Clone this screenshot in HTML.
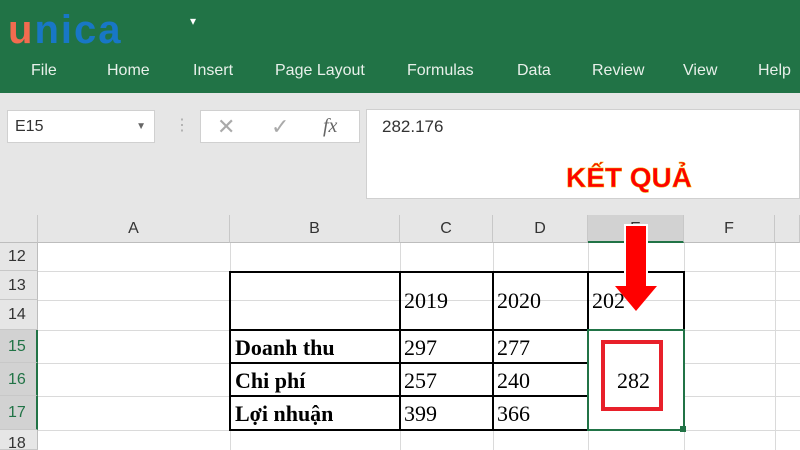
<!DOCTYPE html><html><head><style>
*{margin:0;padding:0;box-sizing:border-box}
html,body{width:800px;height:450px;overflow:hidden}
body{background:#e6e6e6;font-family:"Liberation Sans",sans-serif;position:relative}
.a{position:absolute}
.rib{color:#e8f0ea;font-size:16px;top:62px}
.ch{top:215px;height:28px;background:#e6e6e6;border-right:1px solid #c8c8c8;border-bottom:1px solid #bdbdbd;text-align:center;font-size:16px;line-height:28px;color:#333}
.rh{left:0;width:38px;background:#e6e6e6;border-bottom:1px solid #c8c8c8;border-right:1px solid #bdbdbd;font-size:16px;color:#333;padding-left:8px}
.t{font-family:"Liberation Serif",serif;font-size:22px;color:#000}
</style></head><body>
<div class="a" style="left:0;top:0;width:800px;height:93px;background:#217346"></div>
<div class="a" style="left:8px;top:8px;font-size:40px;font-weight:bold;letter-spacing:2px"><span style="color:#f26b4f">u</span><span style="color:#1877c6">nica</span></div>
<div class="a" style="left:190px;top:14px;color:#fff;font-size:12px">▾</div>
<div class="a rib" style="left:31px">File</div>
<div class="a rib" style="left:107px">Home</div>
<div class="a rib" style="left:193px">Insert</div>
<div class="a rib" style="left:275px">Page Layout</div>
<div class="a rib" style="left:407px">Formulas</div>
<div class="a rib" style="left:517px">Data</div>
<div class="a rib" style="left:592px">Review</div>
<div class="a rib" style="left:683px">View</div>
<div class="a rib" style="left:758px">Help</div>
<div class="a" style="left:7px;top:110px;width:148px;height:33px;background:#fff;border:1px solid #d0d0d0;font-size:16px;line-height:31px;padding-left:7px;color:#333">E15<span style="position:absolute;right:8px;font-size:10px;color:#666">▼</span></div>
<div class="a" style="left:174px;top:115px;color:#aaa;font-size:16px">⋮</div>
<div class="a" style="left:200px;top:110px;width:160px;height:33px;background:#fff;border:1px solid #d0d0d0;color:#aaa;font-size:22px;line-height:31px"><span class="a" style="left:16px">✕</span><span class="a" style="left:70px">✓</span><span class="a" style="left:122px;font-family:'Liberation Serif',serif;font-style:italic;color:#666;font-size:20px">fx</span></div>
<div class="a" style="left:366px;top:109px;width:434px;height:90px;background:#fff;border:1px solid #d0d0d0"></div>
<div class="a" style="left:382px;top:117px;font-size:17px;color:#333">282.176</div>
<div class="a" style="left:566px;top:162px;font-size:28px;font-weight:bold;color:#f00;-webkit-text-stroke:0.5px #e8b000">KẾT QUẢ</div>
<div class="a" style="left:0;top:243px;width:800px;height:207px;background:#fff"></div>
<div class="a ch" style="left:0;width:38px"></div>
<div class="a ch" style="left:38px;width:192px">A</div>
<div class="a ch" style="left:230px;width:170px">B</div>
<div class="a ch" style="left:400px;width:93px">C</div>
<div class="a ch" style="left:493px;width:95px">D</div>
<div class="a ch" style="left:588px;width:96px;background:#d2d2d2;border-bottom:2px solid #217346">E</div>
<div class="a ch" style="left:684px;width:91px">F</div>
<div class="a ch" style="left:775px;width:25px"></div>
<div class="a rh" style="top:243px;height:28px;line-height:28px">12</div>
<div class="a rh" style="top:271px;height:29px;line-height:29px">13</div>
<div class="a rh" style="top:300px;height:30px;line-height:30px">14</div>
<div class="a rh" style="top:330px;height:33px;line-height:33px;background:#d2d2d2;color:#217346;border-right:2px solid #217346">15</div>
<div class="a rh" style="top:363px;height:33px;line-height:33px;background:#d2d2d2;color:#217346;border-right:2px solid #217346">16</div>
<div class="a rh" style="top:396px;height:34px;line-height:34px;background:#d2d2d2;color:#217346;border-right:2px solid #217346">17</div>
<div class="a rh" style="top:430px;height:20px;line-height:28px">18</div>
<svg class="a" style="left:38px;top:243px" width="762" height="207">
<g stroke="#dadada" stroke-width="1">
<line x1="192.5" y1="0" x2="192.5" y2="207"/><line x1="362.5" y1="0" x2="362.5" y2="207"/><line x1="455.5" y1="0" x2="455.5" y2="207"/><line x1="550.5" y1="0" x2="550.5" y2="207"/><line x1="646.5" y1="0" x2="646.5" y2="207"/><line x1="737.5" y1="0" x2="737.5" y2="207"/>
<line x1="0" y1="28.5" x2="762" y2="28.5"/><line x1="0" y1="57.5" x2="762" y2="57.5"/><line x1="0" y1="87.5" x2="762" y2="87.5"/><line x1="0" y1="120.5" x2="762" y2="120.5"/><line x1="0" y1="153.5" x2="762" y2="153.5"/><line x1="0" y1="187.5" x2="762" y2="187.5"/>
</g>
<g stroke="#000" stroke-width="2" fill="none">
<rect x="192" y="29" width="454" height="158"/>
<line x1="362" y1="29" x2="362" y2="187"/><line x1="455" y1="29" x2="455" y2="187"/><line x1="550" y1="29" x2="550" y2="87"/>
<line x1="192" y1="87" x2="550" y2="87"/><line x1="192" y1="120" x2="550" y2="120"/><line x1="192" y1="153" x2="550" y2="153"/>
</g>
<rect x="550" y="87" width="96" height="100" fill="#fff" stroke="#217346" stroke-width="2"/>
<rect x="642" y="183" width="6" height="6" fill="#217346"/>
<rect x="565" y="99" width="58" height="67" fill="none" stroke="#e8202a" stroke-width="4"/>
</svg>
<div class="a t" style="left:404px;top:288px">2019</div>
<div class="a t" style="left:497px;top:288px">2020</div>
<div class="a t" style="left:592px;top:288px">202</div>
<div class="a t" style="left:235px;top:335px;font-weight:bold">Doanh thu</div>
<div class="a t" style="left:235px;top:368px;font-weight:bold">Chi phí</div>
<div class="a t" style="left:235px;top:401px;font-weight:bold">Lợi nhuận</div>
<div class="a t" style="left:404px;top:335px">297</div><div class="a t" style="left:497px;top:335px">277</div>
<div class="a t" style="left:404px;top:368px">257</div><div class="a t" style="left:497px;top:368px">240</div>
<div class="a t" style="left:404px;top:401px">399</div><div class="a t" style="left:497px;top:401px">366</div>
<div class="a t" style="left:617px;top:368px">282</div>
<svg class="a" style="left:0;top:0" width="800" height="450">
<rect x="625" y="225" width="22" height="62" fill="#f00" stroke="#fff" stroke-width="2"/>
<polygon points="615,286 657,286 636,311" fill="#f00"/>
</svg>
</body></html>
